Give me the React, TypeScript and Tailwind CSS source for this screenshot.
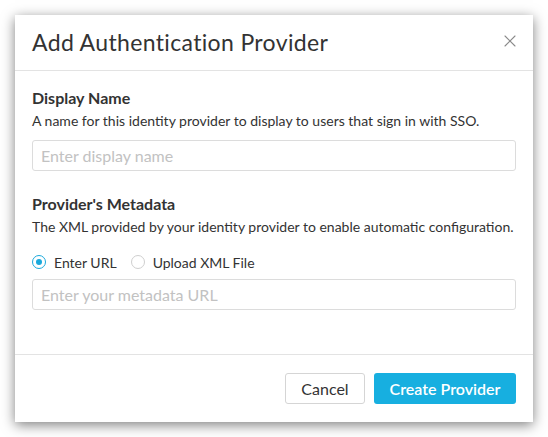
import React from 'react';
import { X } from 'lucide-react';

type Source = 'url' | 'file';

function Radio({ checked, label, onSelect }: { checked: boolean; label: string; onSelect: () => void }) {
  return (
    <label className="flex items-center cursor-pointer" onClick={onSelect}>
      <span
        className={`w-[14px] h-[14px] rounded-full border flex items-center justify-center bg-white ${
          checked ? 'border-[#1aa9dc]' : 'border-[#cfcfcf]'
        }`}
      >
        {checked && <span className="w-[6px] h-[6px] rounded-full bg-[#1aa9dc]" />}
      </span>
      <span className="ml-[8px] text-[14px] text-[#333]">{label}</span>
    </label>
  );
}

export default function App() {
  const [source, setSource] = React.useState<Source>('url');

  return (
    <div className="w-[548px] h-[437px] bg-white pt-[15px] pl-[15px]" style={{ fontFamily: 'Lato, "Open Sans", sans-serif' }}>
      <div className="w-[518px] h-[407px] bg-white flex flex-col shadow-[0_3px_12px_rgba(0,0,0,0.5)]">
        <div className="h-[56px] flex items-center justify-between pl-[17px] pr-[13px] border-b border-[#e3e3e3]">
          <h2 className="text-[23px] text-[#333] tracking-[0.35px]">Add Authentication Provider</h2>
          <button className="text-[#8a8a8a] -mt-[4px]">
            <X className="w-[20px] h-[20px]" strokeWidth={1.3} />
          </button>
        </div>

        <div className="flex-1 px-[17px] pt-[17px]">
          <div className="text-[16px] font-bold text-[#333] leading-[20px]">Display Name</div>
          <p className="text-[14px] text-[#333] mt-[4px] leading-[18px]">
            A name for this identity provider to display to users that sign in with SSO.
          </p>
          <input
            type="text"
            placeholder="Enter display name"
            className="mt-[10px] w-full h-[31px] px-[8px] border border-[#dcdcdc] rounded-[3px] text-[16px] text-[#333] placeholder:text-[#c2c2c2] outline-none"
          />

          <div className="text-[16px] font-bold text-[#333] leading-[20px] mt-[23px]">Provider's Metadata</div>
          <p className="text-[14px] text-[#333] mt-[4px] leading-[18px]">
            The XML provided by your identity provider to enable automatic configuration.
          </p>
          <div className="flex items-center gap-[14px] mt-[16px] h-[20px]">
            <Radio checked={source === 'url'} label="Enter URL" onSelect={() => setSource('url')} />
            <Radio checked={source === 'file'} label="Upload XML File" onSelect={() => setSource('file')} />
          </div>
          <input
            type="text"
            placeholder="Enter your metadata URL"
            className="mt-[7px] w-full h-[31px] px-[8px] border border-[#dcdcdc] rounded-[3px] text-[16px] text-[#333] placeholder:text-[#c2c2c2] outline-none"
          />
        </div>

        <div className="h-[68px] border-t border-[#e3e3e3] flex items-center justify-end gap-[9px] px-[17px]">
          <button className="h-[31px] w-[80px] border border-[#d5d5d5] rounded-[3px] text-[16px] text-[#333] bg-white">
            Cancel
          </button>
          <button className="h-[31px] w-[142px] rounded-[3px] text-[16px] text-white bg-[#17afe0] font-semibold">
            Create Provider
          </button>
        </div>
      </div>
    </div>
  );
}
